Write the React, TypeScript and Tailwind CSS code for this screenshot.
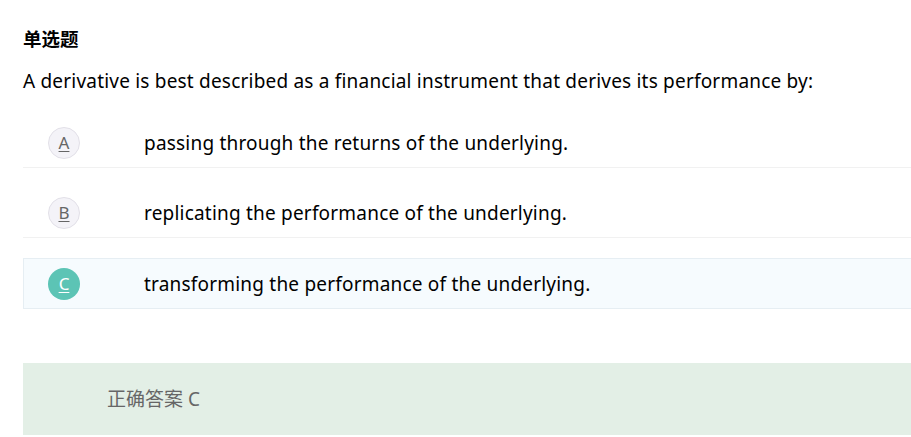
import React from "react";

const options = [
  { key: "A", text: "passing through the returns of the underlying." },
  { key: "B", text: "replicating the performance of the underlying." },
  { key: "C", text: "transforming the performance of the underlying." },
];

const selected = "C";

const App = () => {
  return (
    <div
      className="h-[437px] w-[911px] overflow-hidden bg-white pl-[23px] pt-[28px] text-black"
      style={{ fontFamily: '"Noto Sans", "Noto Sans CJK SC", sans-serif' }}
    >
      <h3 className="text-[18.5px] font-bold leading-[22px]">单选题</h3>
      <p className="mt-[18px] text-[19px] leading-[26px] tracking-[0.2px]">
        A derivative is best described as a financial instrument that derives
        its performance by:
      </p>

      <div className="mt-[24px] w-[900px]">
        {options.map((opt) => {
          const active = opt.key === selected;
          return (
            <div
              key={opt.key}
              className={
                active
                  ? "mb-[54px] flex h-[51px] items-center border border-r-0 border-[#e6eef3] bg-[#f6fbfe]"
                  : "mb-[20px] flex h-[50px] items-center border-b border-[#f1f1f1]"
              }
            >
              <div
                className={
                  active
                    ? "ml-[24px] flex h-[32px] w-[32px] items-center justify-center rounded-full bg-[#5cc4b5] text-[17px] text-white underline underline-offset-2"
                    : "ml-[25px] flex h-[32px] w-[32px] items-center justify-center rounded-full border border-[#e2e0e8] bg-[#f4f3f8] text-[17px] text-[#666] underline underline-offset-2"
                }
              >
                {opt.key}
              </div>
              <span className="ml-[64px] pt-[2px] text-[19px] tracking-[0.2px]">
                {opt.text}
              </span>
            </div>
          );
        })}
      </div>

      <div className="flex h-[72px] w-[900px] items-center bg-[#e3efe6] pl-[84px] text-[19px] text-[#666]">
        正确答案 C
      </div>
    </div>
  );
};

export default App;
